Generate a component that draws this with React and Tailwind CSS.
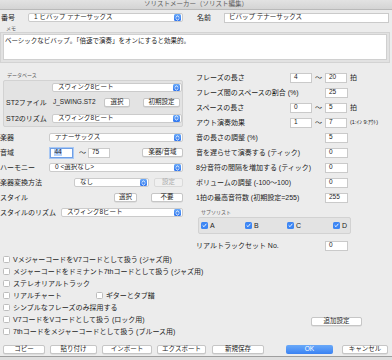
import React from "react";

// Small building blocks for the mac-style dialog
const Arrows = () => (
  <span className="w-[7px] h-[7px] mr-[1px] rounded-[1.5px] bg-gradient-to-b from-[#6aa9f8] to-[#2f74ee] flex items-center justify-center shrink-0">
    <svg width="5" height="6" viewBox="0 0 5 6" fill="none" stroke="#fff" strokeWidth="0.9" strokeLinecap="round" strokeLinejoin="round">
      <path d="M1 2.2 L2.5 0.9 L4 2.2" />
      <path d="M1 3.8 L2.5 5.1 L4 3.8" />
    </svg>
  </span>
);

const Select = ({ value, className = "" }) => (
  <div className={"h-[9px] flex items-center bg-white border border-[#cbcbcb] rounded-[2px] shrink-0 " + className}>
    <span className="flex-1 pl-[5px] text-[6.5px] whitespace-nowrap overflow-hidden">{value}</span>
    <Arrows />
  </div>
);

const Input = ({ value, className = "", focused = false }) => (
  <div
    className={
      "h-[10px] flex items-center bg-white pl-[3px] text-[6.5px] shrink-0 " +
      (focused ? "border border-[#6f9fe6] shadow-[0_0_0_1px_#a9c8f3] " : "border border-[#cacaca] ") +
      className
    }
  >
    {focused ? <span className="bg-[#b7d3fa] px-[0.5px]">{value}</span> : value}
  </div>
);

const Button = ({ text, className = "", disabled = false }) => (
  <div
    className={
      "h-[9px] flex items-center justify-center rounded-[2px] text-[6.5px] shrink-0 " +
      (disabled
        ? "bg-[#f0f0f0] border border-[#dadada] text-[#ababab] "
        : "bg-white border border-[#c6c6c6] shadow-[0_0.5px_0_rgba(0,0,0,0.12)] ") +
      className
    }
  >
    {text}
  </div>
);

const Check = ({ checked = false }) =>
  checked ? (
    <span className="w-[7px] h-[7px] rounded-[1.5px] bg-[#3d86f4] flex items-center justify-center shrink-0">
      <svg width="5" height="5" viewBox="0 0 5 5" fill="none" stroke="#fff" strokeWidth="0.9" strokeLinecap="round" strokeLinejoin="round">
        <path d="M0.9 2.6 L2 3.7 L4.1 1.1" />
      </svg>
    </span>
  ) : (
    <span className="w-[7px] h-[7px] rounded-[1.5px] bg-white border border-[#bdbdbd] shrink-0" />
  );

const RangeRow = ({ label, from, to, unit, note }) => (
  <div className="h-[15px] flex items-center">
    <span className="w-[94px] whitespace-nowrap">{label}</span>
    <Input value={from} className="w-[22px]" />
    <span className="w-[13px] text-center">〜</span>
    <Input value={to} className="w-[22px]" />
    {unit ? <span className="ml-[3px]">{unit}</span> : null}
    {note ? <span className="ml-[3px] text-[5.5px] whitespace-nowrap">{note}</span> : null}
  </div>
);

const ValueRow = ({ label, value, className = "" }) => (
  <div className={"h-[15px] flex items-center " + className}>
    <span className="w-[129px] whitespace-nowrap">{label}</span>
    <Input value={value} className="w-[23px]" />
  </div>
);

const options = [
  "VメジャーコードをV7コードとして扱う (ジャズ用)",
  "メジャーコードをドミナント7thコードとして扱う (ジャズ用)",
  "ステレオリアルトラック",
  "リアルチャート",
  "シンプルなフレーズのみ採用する",
  "V7コードをVコードとして扱う (ロック用)",
  "7thコードをメジャーコードとして扱う (ブルース用)",
];

export default function App() {
  return (
    <div className="w-[392px] h-[360px] bg-[#ececec] flex flex-col overflow-hidden text-[7px] leading-none text-[#1c1c1c] font-['Liberation_Sans','Noto_Sans_CJK_JP',sans-serif]">
      {/* Title bar */}
      <div className="h-[10px] shrink-0 bg-gradient-to-b from-[#e2e2e2] to-[#d4d4d4] border-b border-[#b9b9b9] flex justify-center items-start overflow-hidden">
        <span className="mt-[1px] text-[6.5px] text-[#5a5a5a] whitespace-nowrap">ソリストメーカー（ソリスト編集）</span>
      </div>

      {/* Number / name */}
      <div className="mt-[3px] h-[9px] flex items-center shrink-0">
        <span className="w-[28px] pl-[1px]">番号</span>
        <Select value="1 ビバップ テナーサックス" className="w-[155px]" />
        <span className="ml-[14px] w-[27px]">名前</span>
        <div className="w-[165px] h-[10px] bg-white border border-[#cacaca] flex items-center pl-[4px] text-[6.5px]">
          ビバップ テナーサックス
        </div>
      </div>

      {/* Memo */}
      <div className="mt-[3px] h-[6px] pl-[6px] text-[5px] text-[#555] shrink-0 flex items-center">メモ</div>
      <div className="mt-[1px] w-[390px] h-[31px] shrink-0 bg-[#e2e2e2] border border-[#d3d3d3] px-[2px] pt-[1px]">
        <div className="h-[26px] bg-white border border-[#d0d0d0] pl-[1px] pt-[3px] text-[6.5px] whitespace-nowrap">
          ベーシックなビバップ。「倍速で演奏」をオンにすると効果的。
        </div>
      </div>

      {/* Two columns */}
      <div className="mt-[7px] flex shrink-0">
        {/* Left column */}
        <div className="w-[184px] flex flex-col">
          <div className="h-[10px] flex items-center pl-[7px] text-[5px] text-[#555]">データベース</div>
          <div className="ml-[3px] w-[180px] h-[47px] border border-[#d2d2d2] bg-[#e3e3e3] rounded-[2px] flex flex-col">
            <div className="h-[13px] flex items-center">
              <Select value="スウィング8ビート" className="ml-[48px] w-[130px]" />
            </div>
            <div className="h-[16px] flex items-center">
              <span className="w-[49px] pl-[2px] whitespace-nowrap">ST2ファイル</span>
              <span className="w-[51px] text-[6.5px] whitespace-nowrap">J_SWING.ST2</span>
              <Button text="選択" className="w-[26px]" />
              <Button text="初期設定" className="ml-[13px] w-[37px]" />
            </div>
            <div className="h-[16px] flex items-center">
              <span className="w-[48px] pl-[2px] whitespace-nowrap">ST2のリズム</span>
              <Select value="スウィング8ビート" className="w-[130px]" />
            </div>
          </div>
          <div className="mt-[3px] h-[15px] flex items-center">
            <span className="w-[49px]">楽器</span>
            <Select value="テナーサックス" className="w-[134px]" />
          </div>
          <div className="h-[15px] flex items-center">
            <span className="w-[50px]">音域</span>
            <Input value="44" focused className="w-[23px]" />
            <span className="ml-[6px] w-[8px]">〜</span>
            <Input value="75" className="ml-[1px] w-[22px]" />
            <Button text="楽器/音域" className="ml-auto mr-[1px] w-[41px]" />
          </div>
          <div className="h-[15px] flex items-center">
            <span className="w-[49px] whitespace-nowrap">ハーモニー</span>
            <Select value="0 <選択なし>" className="w-[134px]" />
          </div>
          <div className="h-[15px] flex items-center">
            <span className="w-[74px] whitespace-nowrap">楽器変換方法</span>
            <Select value="なし" className="w-[75px]" />
            <Button text="設定" disabled className="ml-[5px] w-[29px]" />
          </div>
          <div className="h-[15px] flex items-center">
            <span className="w-[114px]">スタイル</span>
            <Button text="選択" className="w-[23px]" />
            <Button text="不要" className="ml-[14px] w-[32px]" />
          </div>
          <div className="h-[15px] flex items-center">
            <span className="w-[61px] whitespace-nowrap">スタイルのリズム</span>
            <Select value="スウィング8ビート" className="w-[122px]" />
          </div>
        </div>

        {/* Right column */}
        <div className="ml-[12px] w-[194px] flex flex-col">
          <RangeRow label="フレーズの長さ" from="4" to="20" unit="拍" />
          <ValueRow label="フレーズ間のスペースの割合 (%)" value="25" />
          <RangeRow label="スペースの長さ" from="0" to="5" unit="拍" />
          <RangeRow label="アウト演奏効果" from="1" to="7" note="(1:ｲﾝ 9:ｱｳﾄ)" />
          <ValueRow label="音の長さの調整 (%)" value="5" />
          <ValueRow label="音を遅らせて演奏する (ティック)" value="0" />
          <ValueRow label="8分音符の間隔を増加する (ティック)" value="0" />
          <ValueRow label="ボリュームの調整 (-100〜100)" value="0" />
          <ValueRow label="1拍の最高音符数 (初期設定=255)" value="255" />
          <div className="h-[12px] flex items-end pb-[2px] pl-[5px] text-[5px] text-[#555]">サブソリスト</div>
          <div className="ml-[2px] w-[153px] h-[17px] border border-[#d2d2d2] bg-[#e3e3e3] rounded-[2px] flex items-center pl-[2px]">
            {["A", "B", "C", "D"].map((l, i) => (
              <div key={l} className={"flex items-center gap-[2px] " + ["w-[44px]", "w-[42px]", "w-[46px]", ""][i]}>
                <Check checked />
                <span>{l}</span>
              </div>
            ))}
          </div>
          <ValueRow label="リアルトラックセット No." value="0" className="mt-[4px]" />
        </div>
      </div>

      {/* Options */}
      <div className="flex shrink-0">
        <div className="flex flex-col pl-[3px]">
          {options.map((o, i) => (
            <div key={o} className="h-[12px] flex items-center gap-[3px] whitespace-nowrap">
              <Check />
              <span>{o}</span>
              {i === 3 ? (
                <>
                  <span className="ml-[28px]"></span>
                  <Check />
                  <span>ギターとタブ譜</span>
                </>
              ) : null}
            </div>
          ))}
        </div>
        <div className="ml-auto mr-[30px] flex flex-col">
          <Button text="追加設定" className="mt-[64px] w-[51px]" />
        </div>
      </div>

      {/* Bottom buttons */}
      <div className="mt-[8px] ml-[3px] flex items-center shrink-0">
        <Button text="コピー" className="w-[42px]" />
        <Button text="貼り付け" className="ml-[5px] w-[47px]" />
        <Button text="インポート" className="ml-[5px] w-[50px]" />
        <Button text="エクスポート" className="ml-[5px] w-[49px]" />
        <Button text="新規保存" className="ml-[6px] w-[52px]" />
        <div className="ml-[22px] w-[47px] h-[9px] rounded-[2px] bg-gradient-to-b from-[#6aa9f8] to-[#3a82f3] text-white text-[6.5px] flex items-center justify-center">
          OK
        </div>
        <Button text="キャンセル" className="ml-[9px] w-[46px]" />
      </div>
      <div className="mt-[2px] h-[1px] bg-[#9e9e9e] shrink-0" />
      <div className="flex-1 bg-[#dedede]" />
    </div>
  );
}
